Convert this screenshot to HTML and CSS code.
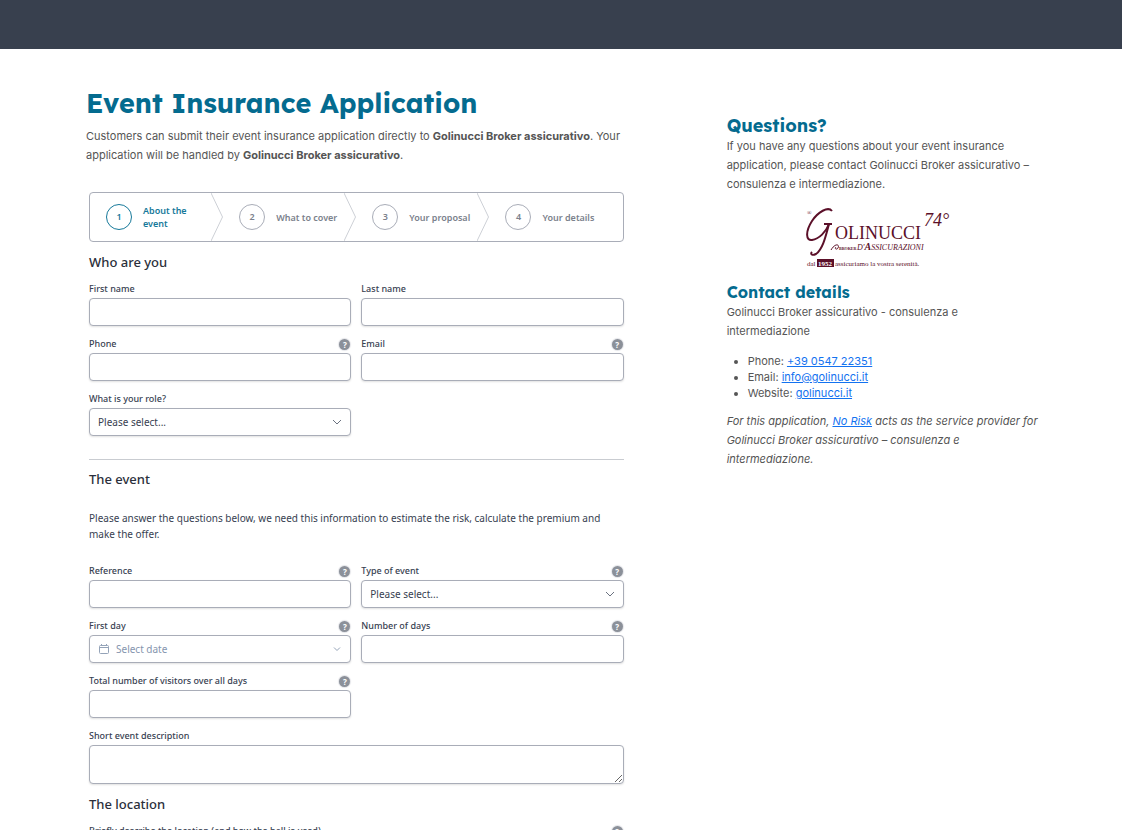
FILE: index.html
```html
<!DOCTYPE html>
<html lang="en">
<head>
    <meta charset="UTF-8">
    <meta name="viewport" content="width=device-width, initial-scale=1.0">
    <title>Event Insurance Application</title>
    <link rel="stylesheet" href="styles.css">
</head>
<body>
    <header class="topbar"></header>
    <div class="page">
        <main class="main">
            <h1>Event Insurance Application</h1>
            <p class="intro">Customers can submit their event insurance application directly to <strong>Golinucci Broker assicurativo</strong>. Your application will be handled by <strong>Golinucci Broker assicurativo</strong>.</p>
            <form class="form">
                <ol class="steps">
                    <li class="step active">
                        <span class="step-number">1</span>
                        <span class="step-label">About the event</span>
                        <svg class="step-arrow" viewBox="0 0 12 48"><path d="M0 0L11.500 24L0 48"/></svg>
                    </li>
                    <li class="step">
                        <span class="step-number">2</span>
                        <span class="step-label">What to cover</span>
                        <svg class="step-arrow" viewBox="0 0 12 48"><path d="M0 0L11.500 24L0 48"/></svg>
                    </li>
                    <li class="step">
                        <span class="step-number">3</span>
                        <span class="step-label">Your proposal</span>
                        <svg class="step-arrow" viewBox="0 0 12 48"><path d="M0 0L11.500 24L0 48"/></svg>
                    </li>
                    <li class="step">
                        <span class="step-number">4</span>
                        <span class="step-label">Your details</span>
                    </li>
                </ol>

                <h2>Who are you</h2>
                <div class="fields">
                    <div class="field">
                        <div class="field-head"><label for="first-name">First name</label></div>
                        <input type="text" id="first-name">
                    </div>
                    <div class="field">
                        <div class="field-head"><label for="last-name">Last name</label></div>
                        <input type="text" id="last-name">
                    </div>
                    <div class="field">
                        <div class="field-head"><label for="phone">Phone</label><button type="button" class="help">?</button></div>
                        <input type="tel" id="phone">
                    </div>
                    <div class="field">
                        <div class="field-head"><label for="email">Email</label><button type="button" class="help">?</button></div>
                        <input type="email" id="email">
                    </div>
                    <div class="field">
                        <div class="field-head"><label for="role">What is your role?</label></div>
                        <div class="select">
                            <select id="role"><option>Please select...</option></select>
                            <svg class="chevron" viewBox="0 0 10 6"><path d="M1 1l4 4 4-4"/></svg>
                        </div>
                    </div>
                </div>

                <hr>

                <h2>The event</h2>
                <p class="note">Please answer the questions below, we need this information to estimate the risk, calculate the premium and make the offer.</p>
                <div class="fields">
                    <div class="field">
                        <div class="field-head"><label for="reference">Reference</label><button type="button" class="help">?</button></div>
                        <input type="text" id="reference">
                    </div>
                    <div class="field">
                        <div class="field-head"><label for="event-type">Type of event</label><button type="button" class="help">?</button></div>
                        <div class="select">
                            <select id="event-type"><option>Please select...</option></select>
                            <svg class="chevron" viewBox="0 0 10 6"><path d="M1 1l4 4 4-4"/></svg>
                        </div>
                    </div>
                    <div class="field">
                        <div class="field-head"><label for="first-day">First day</label><button type="button" class="help">?</button></div>
                        <div class="select date">
                            <svg class="calendar" viewBox="0 0 12 12"><rect x="1.500" y="2.500" width="9" height="8" rx="1"/><path d="M1.500 4.500h9M3.500 1v1.500M8.500 1v1.500"/></svg>
                            <input type="text" id="first-day" placeholder="Select date">
                            <svg class="chevron" viewBox="0 0 10 6"><path d="M2 1.500l3 3 3-3"/></svg>
                        </div>
                    </div>
                    <div class="field">
                        <div class="field-head"><label for="days">Number of days</label><button type="button" class="help">?</button></div>
                        <input type="text" id="days">
                    </div>
                    <div class="field">
                        <div class="field-head"><label for="visitors">Total number of visitors over all days</label><button type="button" class="help">?</button></div>
                        <input type="text" id="visitors">
                    </div>
                    <div class="field wide">
                        <div class="field-head"><label for="description">Short event description</label></div>
                        <textarea id="description"></textarea>
                    </div>
                </div>

                <h2 class="location-title">The location</h2>
                <div class="fields">
                    <div class="field wide">
                        <div class="field-head"><label for="location">Briefly describe the location (and how the hall is used)</label><button type="button" class="help">?</button></div>
                        <textarea id="location"></textarea>
                    </div>
                </div>
            </form>
        </main>

        <aside class="aside">
            <h3 class="questions">Questions?</h3>
            <p>If you have any questions about your event insurance application, please contact Golinucci Broker assicurativo – consulenza e intermediazione.</p>
            <svg class="logo" viewBox="0 0 150 64" role="img" aria-label="Golinucci Broker d'Assicurazioni">
                <g class="logo-line">
                    <path d="M26 5C22 0 12 6 6 15C-1 26 0 35 6 34C13 33 20 26 23 18"/>
                    <path d="M18 18H26"/>
                    <path d="M23 18C20 29 17 43 10 48C6 50 4 48 6 46"/>
                    <path class="thin" d="M25 44C29 37 34 38 32 42C31 44 28 43 30 41"/>
                </g>
                <g class="logo-text">
                    <text x="1" y="9" font-size="6">®</text>
                    <text x="29" y="33" font-size="18">OLINUCCI</text>
                    <text x="118" y="20" font-size="18" font-style="italic">74°</text>
                    <text x="33" y="44" font-size="4" font-weight="bold">BROKER</text>
                    <text x="51" y="44" font-size="8" font-style="italic">D'<tspan font-weight="bold" font-size="10">A</tspan>SSICURAZIONI</text>
                    <text x="1" y="60" font-size="7">dal</text>
                    <rect x="11" y="53" width="17" height="8"/>
                    <text x="12" y="60" font-size="7" font-weight="bold" class="year">1952</text>
                    <text x="29" y="60" font-size="7">assicuriamo la vostra serenità.</text>
                </g>
            </svg>
            <h3>Contact details</h3>
            <p>Golinucci Broker assicurativo - consulenza e intermediazione</p>
            <ul>
                <li>Phone: <a href="tel:+39054722351">+39 0547 22351</a></li>
                <li>Email: <a href="mailto:info@golinucci.it">info@golinucci.it</a></li>
                <li>Website: <a href="#">golinucci.it</a></li>
            </ul>
            <p><em>For this application, <a href="#">No Risk</a> acts as the service provider for Golinucci Broker assicurativo – consulenza e intermediazione.</em></p>
        </aside>
    </div>
</body>
</html>
```
FILE: styles.css
```css
*{
    margin: 0;
    padding: 0;
    box-sizing: border-box;
}
body{
    background: #fff;
    color: #555;
    font: 11px/19px Inter, sans-serif;
}
.topbar{
    height: 49px;
    background: #38404e;
}
.page{
    max-width: 1200px;
    margin: 0 auto;
    padding: 37px 80px 0 86px;
    display: grid;
    grid-template-columns: 12fr 7fr;
    gap: 100px;
}
h1,
h3{
    color: #046b8f;
    font-family: Lexend, Inter, sans-serif;
    font-weight: 700;
}
h1{
    font-size: 27px;
    line-height: 34px;
    margin-bottom: 7px;
}
.form{
    margin: 27px 3px 0;
    color: #374151;
    font-family: "Segoe UI", "Noto Sans", sans-serif;
}
.steps{
    display: grid;
    grid-template-columns: repeat(4, 1fr);
    height: 50px;
    border: 1px solid #a9adb8;
    border-radius: 4px;
    list-style: none;
    margin-bottom: 10px;
}
.step{
    display: flex;
    align-items: center;
    padding-left: 16px;
    color: #7b818c;
    font-size: 9px;
    font-weight: 600;
    line-height: 13px;
}
.step-number{
    flex: none;
    width: 26px;
    height: 26px;
    border: 1px solid #a9adb8;
    border-radius: 50%;
    line-height: 24px;
    text-align: center;
}
.step-label{
    flex: 1;
    padding: 0 6px 0 11px;
}
.step-arrow{
    flex: none;
    width: 12px;
    height: 48px;
    fill: none;
    stroke: #cdd0d6;
}
.active{
    color: #16799a;
}
.active .step-number{
    border-color: #16799a;
}
h2{
    color: #2b303b;
    font-size: 13px;
    font-weight: 500;
    line-height: 20px;
    margin-bottom: 8px;
}
.fields{
    display: grid;
    grid-template-columns: 1fr 1fr;
    gap: 9px 10px;
}
.wide{
    grid-column: 1 / -1;
}
.field-head{
    display: flex;
    align-items: center;
    justify-content: space-between;
    height: 18px;
    font-size: 9px;
    font-weight: 500;
    line-height: 18px;
}
.help{
    width: 11px;
    height: 11px;
    margin-right: 1px;
    border: 0;
    border-radius: 50%;
    background: #8b9099;
    box-shadow: 0 0 1px 1px #e3e4e8;
    color: #fff;
    font: bold 8px/11px "Noto Sans", sans-serif;
    text-align: center;
}
.field input,
.field select,
.field textarea{
    display: block;
    width: 100%;
    height: 28px;
    padding: 0 8px;
    border: 1px solid #a9adb8;
    border-radius: 4px;
    background: #fff;
    box-shadow: 0 1px 2px rgba(0, 0, 0, 0.12);
    color: #374151;
    font: 10px "Segoe UI", "Noto Sans", sans-serif;
    appearance: none;
}
.field textarea{
    height: 39px;
}
.select{
    position: relative;
}
.chevron{
    position: absolute;
    right: 9px;
    top: 11px;
    width: 10px;
    height: 6px;
    fill: none;
    stroke: #6b7280;
    pointer-events: none;
}
.date .chevron,
.calendar{
    stroke: #94a3b8;
}
.field .date input{
    padding-left: 26px;
}
.date input::placeholder{
    color: #8595ae;
}
.calendar{
    position: absolute;
    left: 9px;
    top: 8px;
    width: 12px;
    height: 12px;
    fill: none;
}
hr{
    border: 0;
    border-top: 1px solid #c9ccd1;
    margin: 23px 0 9px;
}
.note{
    font-size: 10px;
    line-height: 16px;
    margin: 21px 0 20px;
}
.location-title{
    margin-top: 10px;
}
.aside{
    padding-top: 29px;
}
.aside h3{
    font-size: 16px;
    line-height: 22px;
}
.aside .questions{
    font-size: 18px;
}
.logo{
    display: block;
    width: 150px;
    height: 64px;
    margin: 12px 0 11px 79px;
}
.logo-line{
    fill: none;
    stroke: #5b1029;
    stroke-width: 2;
}
.logo-line .thin{
    stroke-width: 1;
}
.logo-text{
    fill: #5b1029;
    font-family: "Liberation Serif", serif;
}
.logo-text .year{
    fill: #fff;
}
ul{
    margin: 12px 0 11px;
    padding-left: 21px;
    line-height: 16px;
}
a{
    color: #1372f0;
}
```
